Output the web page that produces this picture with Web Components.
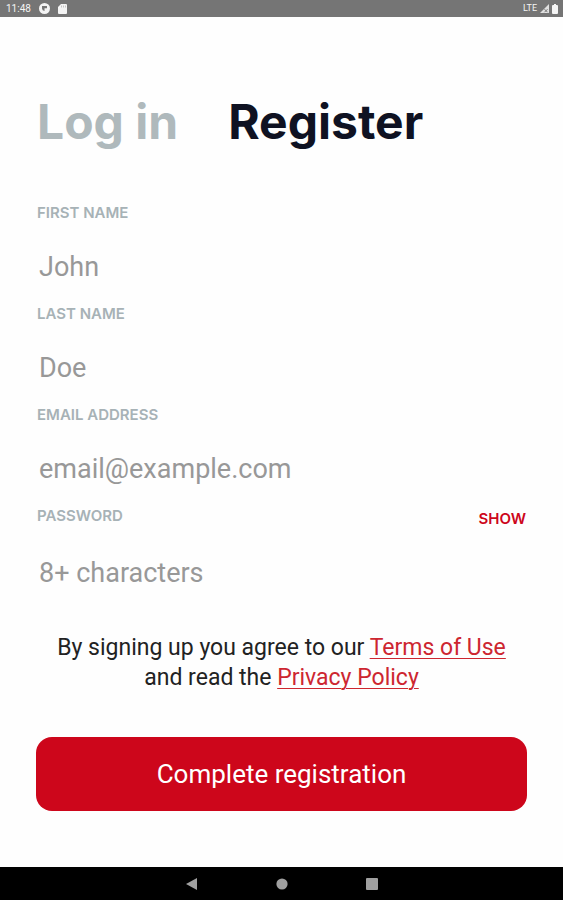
<!DOCTYPE html>
<html lang="en">
<head>
<meta charset="utf-8">
<meta name="viewport" content="width=device-width, initial-scale=1">
<title>Register</title>
<style>
    body {
        margin: 0;
        background: #fefefe;
        font-family: Roboto, sans-serif;
    }
</style>
</head>
<body>
<register-screen></register-screen>

<script>
class StatusBar extends HTMLElement {

    constructor() {
        super();
        this.shadowDOM = this.attachShadow({mode: "open"});
    }

    connectedCallback() {
        this.render();
    }

    render() {
        this.shadowDOM.innerHTML = `
            <style>
                :host {
                    display: flex;
                    justify-content: space-between;
                    height: 17px;
                    padding: 0 5px 0 6px;
                    box-sizing: border-box;
                    background: #757575;
                    color: #f4f4f4;
                    font-size: 10px;
                    line-height: 17px;
                }

                div {
                    display: flex;
                    align-items: center;
                }

                .left {
                    gap: 8px;
                }

                .right {
                    gap: 3px;
                    font-size: 9px;
                }

                svg {
                    display: block;
                    fill: #f4f4f4;
                }
            </style>
            <div class="left">
                <span>11:48</span>
                <svg width="11" height="11" viewBox="0 0 11 11">
                    <circle cx="5.5" cy="5.5" r="5.5"/>
                    <path d="M3 3h5v2.2H5.5V8A2.8 2.8 0 0 1 3 5.4z" fill="#757575"/>
                </svg>
                <svg width="9" height="10" viewBox="0 0 9 10">
                    <path d="M3 0h5q1 0 1 1v8q0 1-1 1H1q-1 0-1-1V3z"/>
                    <path d="M3 1.5h1v2H3zM5 1.5h1v2H5zM7 1.5h1v2H7z" fill="#c5c5c5"/>
                </svg>
            </div>
            <div class="right">
                <span>LTE</span>
                <svg width="9" height="9" viewBox="0 0 9 9">
                    <path d="M9 0v9H0z" opacity=".85"/>
                    <path d="M4.5 5.2l3 3M7.5 5.2l-3 3" stroke="#757575" fill="none"/>
                </svg>
                <svg width="6" height="10" viewBox="0 0 6 10">
                    <path d="M2 0h2v1h1q1 0 1 1v7q0 1-1 1H1q-1 0-1-1V2q0-1 1-1h1z"/>
                </svg>
            </div>`;
    }
}

customElements.define("status-bar", StatusBar);

class AuthTabs extends HTMLElement {

    constructor() {
        super();
        this.shadowDOM = this.attachShadow({mode: "open"});
    }

    connectedCallback() {
        this.render();
    }

    render() {
        this.shadowDOM.innerHTML = `
            <style>
                :host {
                    display: block;
                    padding: 0 1px;
                }

                nav {
                    display: flex;
                    gap: 50px;
                }

                ::slotted(a) {
                    color: #afb9bc;
                    font: bold 48px/58px Inter, sans-serif;
                    text-decoration: none;
                }

                ::slotted(a[aria-current]) {
                    color: #0f1222;
                }
            </style>
            <nav><slot></slot></nav>`;
    }
}

customElements.define("auth-tabs", AuthTabs);

class FormField extends HTMLElement {

    constructor() {
        super();
        this.shadowDOM = this.attachShadow({mode: "open"});
    }

    connectedCallback() {
        this.render();
    }

    render() {
        const type = this.getAttribute("type") || "text";
        this.shadowDOM.innerHTML = `
            <style>
                :host {
                    display: block;
                }

                .heading {
                    display: flex;
                    justify-content: space-between;
                    align-items: flex-start;
                    margin-bottom: 8px;
                    padding: 0 1px;
                }

                label {
                    color: #a7b2b6;
                    font: 600 15px/22px Inter, sans-serif;
                    text-transform: uppercase;
                }

                input {
                    display: block;
                    width: 100%;
                    height: 71px;
                    box-sizing: border-box;
                    padding: 0 3px 2px;
                    border: 0;
                    outline: 0;
                    background: none;
                    color: #111;
                    font: 400 27px Roboto, sans-serif;
                }

                input::placeholder {
                    color: #989898;
                    opacity: 1;
                }
            </style>
            <div class="heading">
                <label for="field">${this.getAttribute("label")}</label>
                <slot name="action"></slot>
            </div>
            <input id="field" type="${type}" placeholder="${this.getAttribute("placeholder")}">`;
    }

    toggle() {
        const input = this.shadowDOM.querySelector("input");
        input.type = input.type === "password" ? "text" : "password";
        return input.type;
    }
}

customElements.define("form-field", FormField);

class PrimaryButton extends HTMLElement {

    constructor() {
        super();
        this.shadowDOM = this.attachShadow({mode: "open"});
    }

    connectedCallback() {
        this.render();
    }

    render() {
        this.shadowDOM.innerHTML = `
            <style>
                :host {
                    display: block;
                }

                button {
                    display: block;
                    width: 100%;
                    padding: 20px;
                    border: 0;
                    border-radius: 16px;
                    background: #cd061b;
                    color: #fff;
                    font: 400 26px/34px Roboto, sans-serif;
                    cursor: pointer;
                }
            </style>
            <button type="button"><slot></slot></button>`;
    }
}

customElements.define("primary-button", PrimaryButton);

class NavigationBar extends HTMLElement {

    constructor() {
        super();
        this.shadowDOM = this.attachShadow({mode: "open"});
    }

    connectedCallback() {
        this.render();
    }

    render() {
        this.shadowDOM.innerHTML = `
            <style>
                :host {
                    display: flex;
                    justify-content: center;
                    gap: 66px;
                    height: 33px;
                    background: #000;
                }

                button {
                    display: grid;
                    place-items: center;
                    width: 24px;
                    padding: 0;
                    border: 0;
                    background: none;
                }

                svg {
                    display: block;
                    fill: #a0a0a0;
                }
            </style>
            <button type="button" aria-label="Back">
                <svg width="12" height="12" viewBox="0 0 12 12"><path d="M11 0v12L0 6z"/></svg>
            </button>
            <button type="button" aria-label="Home">
                <svg width="12" height="12" viewBox="0 0 12 12"><circle cx="6" cy="6" r="5.6"/></svg>
            </button>
            <button type="button" aria-label="Overview">
                <svg width="12" height="12" viewBox="0 0 12 12"><rect width="12" height="12" rx="1"/></svg>
            </button>`;
    }
}

customElements.define("navigation-bar", NavigationBar);

class RegisterScreen extends HTMLElement {

    constructor() {
        super();
        this.shadowDOM = this.attachShadow({mode: "open"});
    }

    connectedCallback() {
        this.render();
    }

    render() {
        this.shadowDOM.innerHTML = `
            <style>
                :host {
                    display: flex;
                    flex-direction: column;
                    min-height: 100vh;
                }

                main {
                    flex-grow: 1;
                    padding: 76px 36px 56px;
                }

                auth-tabs {
                    margin-bottom: 51px;
                }

                .show {
                    padding: 3px 0 0;
                    border: 0;
                    background: none;
                    color: #cd061b;
                    font: 600 15px/22px Inter, sans-serif;
                    cursor: pointer;
                }

                p {
                    max-width: 460px;
                    margin: 24px auto 44px;
                    color: #222;
                    font-size: 23px;
                    line-height: 30px;
                    text-align: center;
                }

                p a {
                    color: #cd2630;
                    text-decoration: underline 1px #cd2630;
                    text-underline-offset: 3px;
                }
            </style>
            <status-bar></status-bar>
            <main>
                <auth-tabs>
                    <a href="#login">Log in</a>
                    <a href="#register" aria-current="page">Register</a>
                </auth-tabs>
                <form-field label="First name" placeholder="John"></form-field>
                <form-field label="Last name" placeholder="Doe"></form-field>
                <form-field label="Email address" type="email" placeholder="email@example.com"></form-field>
                <form-field label="Password" type="password" placeholder="8+ characters">
                    <button class="show" slot="action" type="button">SHOW</button>
                </form-field>
                <p>By signing up you agree to our <a href="#terms">Terms of Use</a> and read the <a href="#privacy">Privacy Policy</a></p>
                <primary-button>Complete registration</primary-button>
            </main>
            <navigation-bar></navigation-bar>`;

        const show = this.shadowDOM.querySelector(".show");
        show.addEventListener("click", () => {
            show.textContent = show.parentElement.toggle() === "password" ? "SHOW" : "HIDE";
        });
    }
}

customElements.define("register-screen", RegisterScreen);
</script>
</body>
</html>
